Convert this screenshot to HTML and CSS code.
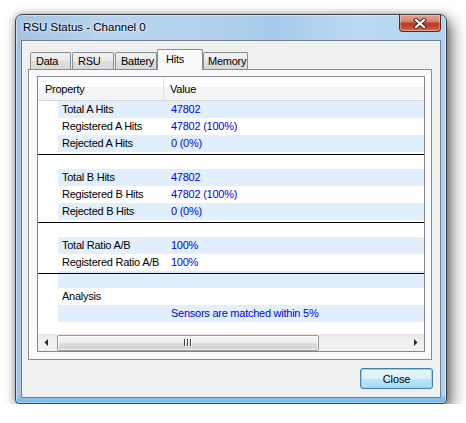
FILE: index.html
```html
<!DOCTYPE html>
<html>
<head>
<meta charset="utf-8">
<title>RSU Status - Channel 0</title>
<link rel="stylesheet" href="styles.css">
</head>
<body>
<div class="window">
  <div class="titlebar">
    <span class="title">RSU Status - Channel 0</span>
    <div class="close-cap">
      <svg width="14" height="11" viewBox="0 0 14 11">
        <path d="M3 2 L11 9 M11 2 L3 9" stroke="#4a2420" stroke-width="4.2" stroke-linecap="square" fill="none"/>
        <path d="M3 2 L11 9 M11 2 L3 9" stroke="#ffffff" stroke-width="2.2" stroke-linecap="square" fill="none"/>
      </svg>
    </div>
  </div>
  <div class="client">
    <div class="tabstrip">
      <div class="tab t-data">Data</div>
      <div class="tab t-rsu">RSU</div>
      <div class="tab t-batt">Battery</div>
      <div class="tab t-hits selected">Hits</div>
      <div class="tab t-mem">Memory</div>
    </div>
    <div class="panel">
      <div class="list">
        <div class="header">
          <div class="hcell hprop">Property</div>
          <div class="hcell hval">Value</div>
        </div>
        <div class="rows">
          <div class="row alt"><span class="prop">Total A Hits</span><span class="val">47802</span></div>
          <div class="row"><span class="prop">Registered A Hits</span><span class="val">47802 (100%)</span></div>
          <div class="row alt"><span class="prop">Rejected A Hits</span><span class="val">0 (0%)</span></div>
          <div class="row sep"></div>
          <div class="row alt"><span class="prop">Total B Hits</span><span class="val">47802</span></div>
          <div class="row"><span class="prop">Registered B Hits</span><span class="val">47802 (100%)</span></div>
          <div class="row alt"><span class="prop">Rejected B Hits</span><span class="val">0 (0%)</span></div>
          <div class="row sep"></div>
          <div class="row alt"><span class="prop">Total Ratio A/B</span><span class="val">100%</span></div>
          <div class="row"><span class="prop">Registered Ratio A/B</span><span class="val">100%</span></div>
          <div class="row alt sep"></div>
          <div class="row"><span class="prop">Analysis</span><span class="val"></span></div>
          <div class="row alt"><span class="prop"></span><span class="val">Sensors are matched within 5%</span></div>
        </div>
        <div class="hscroll">
          <div class="sbtn">
            <svg width="5" height="7" viewBox="0 0 5 7"><path d="M4 0 L4 7 L0.5 3.5 Z" fill="#2a2a2a"/></svg>
          </div>
          <div class="track">
            <div class="thumb">
              <div class="grip"><i></i><i></i><i></i></div>
            </div>
          </div>
          <div class="sbtn">
            <svg width="5" height="7" viewBox="0 0 5 7"><path d="M1 0 L1 7 L4.5 3.5 Z" fill="#2a2a2a"/></svg>
          </div>
        </div>
      </div>
    </div>
    <button class="btn">Close</button>
  </div>
</div>
</body>
</html>
```

FILE: styles.css
```css
html, body {
  margin: 0;
  padding: 0;
  background: #ffffff;
}

body {
  font-family: "Liberation Sans", Arial, sans-serif;
  font-size: 11px;
  color: #000;
}

.window {
  margin: 14px 0 0 15px;
  width: 432px;
  height: 390px;
  box-sizing: border-box;
  border: 1px solid #3a4048;
  border-radius: 7px 7px 4px 4px;
  padding: 0 5px 5px;
  display: flex;
  flex-direction: column;
  background:
    linear-gradient(to top, #4dbdf2 0, #6fb8ea 1px, #8cc4ec 5px, rgba(140,196,236,0) 8px),
    linear-gradient(to right, #a3c3e3 0%, #b7d3ee 20%, #b3d1ee 45%, #a7cbec 60%, #bcd9f3 80%, #b0d3f2 100%);
  box-shadow: inset 0 0 0 1px rgba(255,255,255,0.45), 5px 7px 16px rgba(0,0,0,0.55), 0 0 7px rgba(0,0,0,0.3);
}

.titlebar {
  height: 25px;
  display: flex;
  align-items: flex-start;
}

.title {
  font-size: 11.5px;
  line-height: 14px;
  margin: 5px 0 0 2px;
  color: #000;
  text-shadow: 0 0 6px rgba(255,255,255,0.9), 0 0 3px rgba(255,255,255,0.7);
}

.close-cap {
  margin-left: auto;
  width: 42px;
  height: 17px;
  box-sizing: border-box;
  border: 1px solid #5a2621;
  border-top: none;
  border-radius: 0 0 4px 4px;
  background: linear-gradient(#e3a597 0%, #d6836f 40%, #bd3b26 52%, #c2432d 75%, #d9765c 100%);
  box-shadow: inset 0 0 0 1px rgba(255,210,200,0.45);
  display: flex;
  align-items: center;
  justify-content: center;
}

.close-cap svg {
  display: block;
}

.client {
  height: 358px;
  box-sizing: border-box;
  border: 1px solid #6f7e8e;
  background: #f0f0f0;
  padding: 8px 7px 8px 6px;
  display: flex;
  flex-direction: column;
}

.tabstrip {
  height: 20px;
  margin-left: 2px;
  display: flex;
  align-items: flex-end;
}

.tab {
  box-sizing: border-box;
  height: 17px;
  border: 1px solid #898c95;
  border-bottom: none;
  border-radius: 2px 2px 0 0;
  background: linear-gradient(#f3f3f3, #e9e9e9 50%, #dedede 51%, #d9d9d9);
  line-height: 16px;
  padding-left: 5px;
  letter-spacing: -0.25px;
  white-space: nowrap;
}

.t-data { width: 41px; margin-right: 1px; }
.t-rsu { width: 42px; margin-right: 1px; }
.t-batt { width: 42px; }
.t-hits { width: 46px; padding-left: 8px; }
.t-mem { width: 45px; padding-left: 4px; }

.tab.selected {
  height: 21px;
  margin-bottom: -1px;
  background: #fafafa;
  padding-top: 1px;
  position: relative;
  z-index: 1;
}

.panel {
  width: 404px;
  height: 291px;
  box-sizing: border-box;
  border: 1px solid #898c95;
  background: #fafafa;
  padding: 6px 6px 7px 8px;
}

.list {
  width: 388px;
  height: 276px;
  box-sizing: border-box;
  border: 1px solid #828790;
  background: #ffffff;
  display: flex;
  flex-direction: column;
  letter-spacing: -0.25px;
}

.header {
  height: 24px;
  box-sizing: border-box;
  border-bottom: 1px solid #d5d5d5;
  background: linear-gradient(#ffffff 0, #ffffff 45%, #f4f5f6 45%, #f4f5f6 100%);
  display: flex;
}

.hcell {
  line-height: 23px;
  padding-top: 1px;
  box-sizing: border-box;
}

.hprop {
  width: 126px;
  padding-left: 7px;
  border-right: 1px solid #e3e5e8;
}

.hval {
  padding-left: 6px;
}

.rows {
  flex: 1;
}

.row {
  height: 17px;
  display: grid;
  grid-template-columns: 125px 1fr;
  line-height: 17px;
  white-space: nowrap;
}

.row.alt {
  background: linear-gradient(to right, transparent 20px, #e1f0fc 20px);
}

.row.sep {
  background: linear-gradient(#000, #000) no-repeat 0 2px / 100% 1px;
}

.row.alt.sep {
  background:
    linear-gradient(#000, #000) no-repeat 0 2px / 100% 1px,
    linear-gradient(to right, transparent 20px, #e1f0fc 20px);
}

.prop {
  padding-left: 24px;
}

.val {
  padding-left: 8px;
  color: #0000f0;
}

.hscroll {
  height: 17px;
  display: flex;
  background: linear-gradient(#e6e6e6, #f1f1f1 40%, #f1f1f1);
}

.sbtn {
  width: 17px;
  display: flex;
  align-items: center;
  justify-content: center;
}

.sbtn svg {
  display: block;
}

.track {
  flex: 1;
  display: flex;
  align-items: center;
}

.thumb {
  margin-left: 2px;
  width: 262px;
  height: 16px;
  box-sizing: border-box;
  border: 1px solid #9a9a9a;
  border-radius: 2px;
  background: linear-gradient(#f6f6f6, #ececec 48%, #dcdcdc 52%, #d3d3d3);
  box-shadow: inset 0 0 0 1px rgba(255,255,255,0.7);
  display: flex;
  align-items: center;
  justify-content: center;
}

.grip {
  display: flex;
  gap: 1px;
}

.grip i {
  display: block;
  width: 1px;
  height: 7px;
  background: #3c3c3c;
  border-right: 1px solid #ffffff;
}

.btn {
  align-self: flex-end;
  margin-top: 8px;
  width: 73px;
  height: 21px;
  box-sizing: border-box;
  border: 1px solid #3c7fb1;
  border-radius: 3px;
  background: linear-gradient(#eaf6fd 0, #d9f0fc 50%, #bee6fd 50%, #a7d9f5 100%);
  box-shadow: inset 0 0 0 1px #7fdcfb;
  font-family: "Liberation Sans", Arial, sans-serif;
  font-size: 11px;
  color: #000;
  padding: 0;
  letter-spacing: -0.1px;
}
```
